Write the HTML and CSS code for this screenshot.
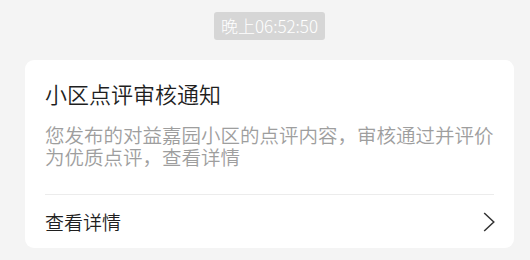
FILE: index.html
```html
<!DOCTYPE html>
<html lang="zh-CN">
<head>
<meta charset="utf-8">
<link rel="stylesheet" href="styles.css">
</head>
<body>
<div class="page">
  <div class="time-row"><span class="time">晚上06:52:50</span></div>
  <div class="card">
    <div class="title">小区点评审核通知</div>
    <div class="desc">您发布的对益嘉园小区的点评内容，审核通过并评价为优质点评，查看详情</div>
    <div class="link-row">
      <span class="link-text">查看详情</span>
      <svg class="chev" width="12" height="20" viewBox="0 0 12 20"><path d="M1.2 1 L10.8 10 L1.2 19" fill="none" stroke="#333" stroke-width="1.5"/></svg>
    </div>
  </div>
</div>
</body>
</html>
```
FILE: styles.css
```css
html, body {
  margin: 0;
  padding: 0;
  background: #f4f4f4;
  font-family: "Noto Sans CJK SC", "Noto Sans", sans-serif;
}
.page {
  width: 489px;
  padding: 12px 0 0 25px;
}
.time-row {
  display: flex;
  justify-content: center;
}
.time {
  background: #d6d6d6;
  color: #fff;
  font-size: 17px;
  font-weight: 300;
  line-height: 28px;
  height: 28px;
  padding: 0 7px;
  border-radius: 3px;
}
.card {
  margin-top: 20px;
  background: #fff;
  border-radius: 9px;
  padding: 0 20px;
}
.title {
  padding-top: 18px;
  font-size: 22px;
  font-weight: 350;
  line-height: 30px;
  color: #1f1f1f;
}
.desc {
  margin-top: 16px;
  font-size: 19.5px;
  font-weight: 350;
  line-height: 22px;
  color: #9e9e9e;
  padding-bottom: 26px;
  border-bottom: 1px solid #ececec;
}
.link-row {
  display: flex;
  justify-content: space-between;
  align-items: center;
  height: 53px;
}
.link-text {
  font-size: 19px;
  font-weight: 350;
  color: #1f1f1f;
}
.chev {
  margin-right: -1px;
}
```
